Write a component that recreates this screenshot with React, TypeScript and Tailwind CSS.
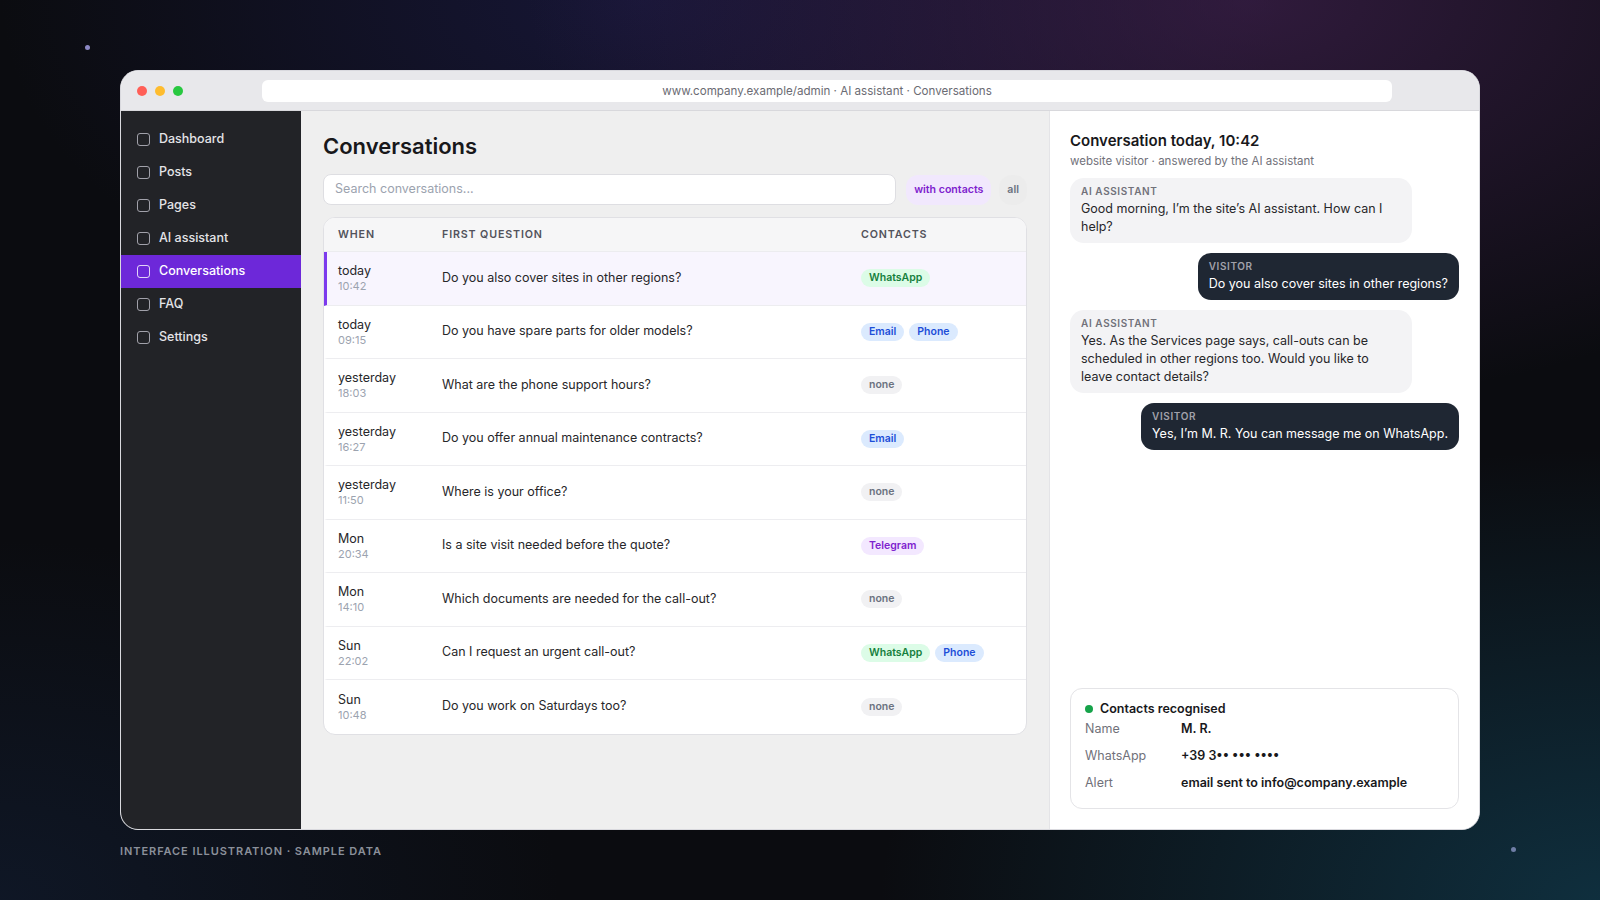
import React from 'react';

type Tag = 'WhatsApp' | 'Email' | 'Phone' | 'Telegram' | 'none';

const rows: { day: string; time: string; q: string; tags: Tag[]; active?: boolean }[] = [
  { day: 'today', time: '10:42', q: 'Do you also cover sites in other regions?', tags: ['WhatsApp'], active: true },
  { day: 'today', time: '09:15', q: 'Do you have spare parts for older models?', tags: ['Email', 'Phone'] },
  { day: 'yesterday', time: '18:03', q: 'What are the phone support hours?', tags: ['none'] },
  { day: 'yesterday', time: '16:27', q: 'Do you offer annual maintenance contracts?', tags: ['Email'] },
  { day: 'yesterday', time: '11:50', q: 'Where is your office?', tags: ['none'] },
  { day: 'Mon', time: '20:34', q: 'Is a site visit needed before the quote?', tags: ['Telegram'] },
  { day: 'Mon', time: '14:10', q: 'Which documents are needed for the call-out?', tags: ['none'] },
  { day: 'Sun', time: '22:02', q: 'Can I request an urgent call-out?', tags: ['WhatsApp', 'Phone'] },
  { day: 'Sun', time: '10:48', q: 'Do you work on Saturdays too?', tags: ['none'] },
];

const tagStyle: Record<Tag, string> = {
  WhatsApp: 'bg-[#dcfce7] text-[#15803d]',
  Email: 'bg-[#dbeafe] text-[#1d4ed8]',
  Phone: 'bg-[#dbeafe] text-[#1d4ed8]',
  Telegram: 'bg-[#f3e8ff] text-[#7e22ce]',
  none: 'bg-[#f1f1f3] text-[#6b7280]',
};

const nav = ['Dashboard', 'Posts', 'Pages', 'AI assistant', 'Conversations', 'FAQ', 'Settings'];

const messages: { from: 'ai' | 'visitor'; text: string }[] = [
  { from: 'ai', text: 'Good morning, I’m the site’s AI assistant. How can I help?' },
  { from: 'visitor', text: 'Do you also cover sites in other regions?' },
  {
    from: 'ai',
    text: 'Yes. As the Services page says, call-outs can be scheduled in other regions too. Would you like to leave contact details?',
  },
  { from: 'visitor', text: 'Yes, I’m M. R. You can message me on WhatsApp.' },
];

const App: React.FC = () => {
  return (
    <div className="relative h-[900px] w-full overflow-hidden bg-[#0b0c10] bg-[image:radial-gradient(ellipse_45%_45%_at_78%_0%,rgba(78,38,96,0.55),transparent),radial-gradient(ellipse_40%_40%_at_40%_0%,rgba(36,34,100,0.45),transparent),radial-gradient(ellipse_45%_50%_at_100%_100%,rgba(18,70,92,0.6),transparent),radial-gradient(ellipse_35%_40%_at_0%_100%,rgba(20,36,64,0.45),transparent)] px-[120px] pt-[70px] font-['Inter',sans-serif]">
      {/* decorative dots */}
      <div className="absolute left-[85px] top-[45px] h-[5px] w-[5px] rounded-full bg-[#8c88c4]" />
      <div className="absolute left-[1511px] top-[847px] h-[5px] w-[5px] rounded-full bg-[#6f7ea6]" />

      {/* Window */}
      <div className="flex h-[760px] flex-col overflow-hidden rounded-[18px] border border-[#d9d9de] bg-white">
        {/* Title bar */}
        <div className="flex h-[40px] shrink-0 items-center border-b border-[#d8d8dc] bg-[#e8e8eb] pl-4 pr-[87px]">
          <div className="flex gap-2">
            <span className="h-[10px] w-[10px] rounded-full bg-[#ff5f57]" />
            <span className="h-[10px] w-[10px] rounded-full bg-[#febc2e]" />
            <span className="h-[10px] w-[10px] rounded-full bg-[#28c840]" />
          </div>
          <div className="ml-[79px] flex h-[22px] flex-1 items-center justify-center rounded-md bg-white pt-[3px] text-[11.6px] text-[#6b6b73]">
            www.company.example/admin · AI assistant · Conversations
          </div>
        </div>

        <div className="flex min-h-0 flex-1">
          {/* Sidebar */}
          <aside className="w-[180px] shrink-0 bg-[#222327] pt-3">
            {nav.map((item) => {
              const active = item === 'Conversations';
              return (
                <div
                  key={item}
                  className={`flex h-[33px] items-center gap-[9px] px-4 text-[12.5px] font-medium ${
                    active ? 'bg-[#6d28d9] text-white' : 'text-[#e4e4e7]'
                  }`}
                >
                  <span className={`h-[13px] w-[13px] rounded-[3px] border-[1.5px] ${active ? 'border-white/80' : 'border-[#a1a1aa]'}`} />
                  {item}
                </div>
              );
            })}
          </aside>

          {/* Main */}
          <main className="flex-1 bg-[#efefef] px-[22px] pt-[21px]">
            <h1 className="text-[22px] font-semibold leading-[28px] text-[#18181b]">Conversations</h1>

            <div className="mt-[14px] flex items-center gap-[10px]">
              <div className="flex h-[31px] flex-1 items-center rounded-lg border border-[#dedee2] bg-white pl-[11px] text-[12.5px] text-[#9ca3af]">
                Search conversations...
              </div>
              <div className="flex gap-2">
                <span className="flex h-[30px] items-center rounded-[12px] bg-[#f1e8fd] px-2 text-[10.6px] font-semibold text-[#7e22ce]">
                  with contacts
                </span>
                <span className="flex h-[30px] items-center rounded-[12px] bg-black/[0.012] px-2 text-[10.6px] font-semibold text-[#6b7280]">
                  all
                </span>
              </div>
            </div>

            <div className="mt-[12px] overflow-hidden rounded-xl border border-[#e0e0e4] bg-white">
              <div className="flex h-[34px] items-center border-b border-[#ececef] bg-[#f6f6f7] pl-[14px] pt-px text-[10.7px] font-semibold tracking-[0.08em] text-[#52525b]">
                <div className="w-[104px]">WHEN</div>
                <div className="w-[419px]">FIRST QUESTION</div>
                <div>CONTACTS</div>
              </div>
              {rows.map((r, i) => (
                <div
                  key={i}
                  className={`flex h-[53.5px] items-center border-l-[3px] pl-[11px] ${
                    i < rows.length - 1 ? 'border-b border-b-[#ededf0]' : ''
                  } ${r.active ? 'border-l-[#7c3aed] bg-[#f8f5fe]' : 'border-l-transparent'}`}
                >
                  <div className="w-[104px]">
                    <div className="text-[12.5px] leading-[17px] text-[#27272a]">{r.day}</div>
                    <div className="text-[11px] leading-[15px] text-[#9ca3af]">{r.time}</div>
                  </div>
                  <div className="w-[419px] text-[12.5px] text-[#27272a]">{r.q}</div>
                  <div className="flex gap-[5px]">
                    {r.tags.map((t) => (
                      <span
                        key={t}
                        className={`flex h-[18px] items-center rounded-full px-2 text-[10.5px] font-semibold ${tagStyle[t]}`}
                      >
                        {t}
                      </span>
                    ))}
                  </div>
                </div>
              ))}
            </div>
          </main>

          {/* Conversation panel */}
          <section className="flex w-[430px] shrink-0 flex-col border-l border-[#e4e4e7] bg-white px-5 pb-5 pt-5">
            <h2 className="text-[15px] font-semibold leading-5 text-[#18181b]">Conversation today, 10:42</h2>
            <p className="mt-0.5 text-[11.5px] leading-4 text-[#71717a]">website visitor · answered by the AI assistant</p>

            <div className="mt-[9px] flex flex-1 flex-col gap-[10px]">
              {messages.map((m, i) =>
                m.from === 'ai' ? (
                  <div key={i} className="max-w-[88%] self-start rounded-[14px] bg-[#f3f3f5] px-[11px] py-[7px]">
                    <div className="text-[10px] font-semibold leading-[13px] tracking-[0.06em] text-[#71717a]">AI ASSISTANT</div>
                    <div className="mt-[2px] text-[12.5px] leading-[18px] text-[#27272a]">{m.text}</div>
                  </div>
                ) : (
                  <div key={i} className="max-w-[88%] self-end rounded-[13px] bg-[#1f2733] px-[11px] py-[7px]">
                    <div className="text-[10px] font-semibold leading-[13px] tracking-[0.06em] text-[#a1a1aa]">VISITOR</div>
                    <div className="mt-[2px] text-[12.5px] leading-[18px] text-white">{m.text}</div>
                  </div>
                )
              )}
            </div>

            <div className="rounded-xl border border-[#e4e4e7] bg-white px-[14px] pb-[15px] pt-[10px]">
              <div className="flex items-center gap-[7px] text-[12.5px] font-semibold leading-5 text-[#18181b]">
                <span className="h-2 w-2 rounded-full bg-[#16a34a]" />
                Contacts recognised
              </div>
              <div className="flex flex-col gap-[7px] text-[12.5px] leading-5">
                <div className="flex">
                  <span className="w-[96px] text-[#71717a]">Name</span>
                  <span className="font-semibold text-[#18181b]">M. R.</span>
                </div>
                <div className="flex">
                  <span className="w-[96px] text-[#71717a]">WhatsApp</span>
                  <span className="font-semibold text-[#18181b]">+39 3•• ••• ••••</span>
                </div>
                <div className="flex">
                  <span className="w-[96px] text-[#71717a]">Alert</span>
                  <span className="font-semibold text-[#18181b]">email sent to info@company.example</span>
                </div>
              </div>
            </div>
          </section>
        </div>
      </div>

      <div className="mt-[14px] text-[11px] font-semibold leading-[14px] tracking-[0.085em] text-[#8b909a]">
        INTERFACE ILLUSTRATION · SAMPLE DATA
      </div>
    </div>
  );
};

export default App;
